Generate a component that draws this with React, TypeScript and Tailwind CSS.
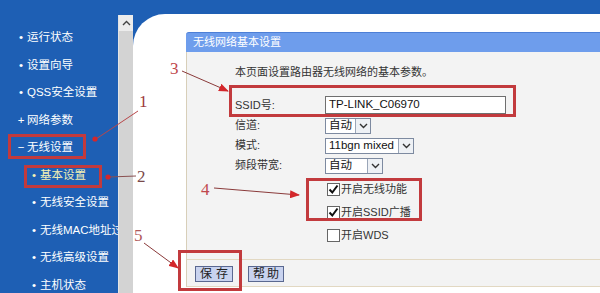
const menu = [
  { label: "运行状态", mark: "•" },
  { label: "设置向导", mark: "•" },
  { label: "QSS安全设置", mark: "•" },
  { label: "网络参数", mark: "+" },
  { label: "无线设置", mark: "−" },
  { label: "基本设置", mark: "•", sub: true, active: true },
  { label: "无线安全设置", mark: "•", sub: true },
  { label: "无线MAC地址过滤", mark: "•", sub: true },
  { label: "无线高级设置", mark: "•", sub: true },
  { label: "主机状态", mark: "•", sub: true },
]

const font = "font-['Liberation_Sans','Noto_Sans_CJK_SC',sans-serif]"

function Chevron() {
  return (
    <svg width="9" height="6" viewBox="0 0 9 6">
      <path d="M1 1 L4.5 4.5 L8 1" fill="none" stroke="#333" strokeWidth="1.4" />
    </svg>
  )
}

function Select({ value, width }: { value: string; width: string }) {
  return (
    <div className={`${width} h-[16px] flex border border-[#7d8aa0] bg-white`}>
      <div className="flex-1 pl-[3px] flex items-center text-[11.5px] text-[#111] leading-none">{value}</div>
      <div className="w-[15px] border-l border-[#9aa6b8] bg-[#eef1f5] flex items-center justify-center">
        <Chevron />
      </div>
    </div>
  )
}

function Check({ checked, label }: { checked: boolean; label: string }) {
  return (
    <div className="flex items-center ml-[2px]">
      <div className="w-[13px] h-[13px] border border-[#666] bg-white flex items-center justify-center">
        {checked && (
          <svg width="11" height="11" viewBox="0 0 11 11">
            <path d="M1.5 5.5 L4.3 8.5 L9.5 1.5" fill="none" stroke="#111" strokeWidth="2" />
          </svg>
        )}
      </div>
      <span className="ml-[1px] text-[11px] text-[#333]">{label}</span>
    </div>
  )
}

function Row({ label, children, className = "" }: { label: string; children: React.ReactNode; className?: string }) {
  return (
    <div className={`flex items-center ${className}`}>
      <div className="w-[90px] text-[11px] text-[#333]">{label}</div>
      {children}
    </div>
  )
}

export default function App() {
  return (
    <div className={`relative w-[600px] h-[293px] overflow-hidden bg-[#1e5fb4] flex flex-col ${font}`}>
      {/* top bar */}
      <div className="h-[14px] shrink-0" />

      <div className="flex flex-1 min-h-0">
        {/* sidebar */}
        <div className="w-[118px] shrink-0 pt-[10px] overflow-hidden">
          {menu.map((m) => (
            <div
              key={m.label}
              className={`h-[27.5px] flex items-center whitespace-nowrap text-[11.5px] ${m.sub ? "pl-[29px]" : "pl-[16px]"} ${m.active ? "text-[#f2f0b4]" : "text-white"}`}
            >
              <span className="w-[10px] shrink-0 text-center">{m.mark}</span>
              <span className="ml-[1px] shrink-0">{m.label}</span>
            </div>
          ))}
        </div>

        {/* scrollbar */}
        <div className="w-[15px] shrink-0 mt-[1px] bg-[#d3d3d3] border-l border-[#e4e4e4] flex flex-col">
          <div className="h-[16px] bg-[#ececec] flex items-center justify-center">
            <svg width="9" height="6" viewBox="0 0 9 6">
              <path d="M1 5 L4.5 1.5 L8 5" fill="none" stroke="#444" strokeWidth="1.4" />
            </svg>
          </div>
        </div>

        {/* main */}
        <div className="flex-1 bg-white rounded-tl-[32px] pl-[53px] pt-[18px] overflow-hidden">
          <div className="flex flex-col">
            <div className="h-[20px] bg-[#6e9dec] border-t border-[#4d7fd6] rounded-tl-[3px] pl-[7px] flex items-center text-[11px] text-white">
              无线网络基本设置
            </div>
            <div className="bg-[#f3f3f3] border-l border-[#d8cfb9] flex flex-col">
              <div className="pl-[48px] flex flex-col">
                <div className="mt-[12px] h-[16px] flex items-center text-[11px] text-[#333]">
                  本页面设置路由器无线网络的基本参数。
                </div>
                <Row label="SSID号:" className="mt-[15px] h-[20px]">
                  <div className="w-[181px] h-[18px] border border-[#6f6f6f] bg-white pl-[3px] flex items-center text-[11.5px] text-[#111]">
                    TP-LINK_C06970
                  </div>
                </Row>
                <Row label="信道:" className="mt-[1px] h-[19px]">
                  <Select value="自动" width="w-[46px]" />
                </Row>
                <Row label="模式:" className="mt-[1px] h-[19px]">
                  <Select value="11bgn mixed" width="w-[89px]" />
                </Row>
                <Row label="频段带宽:" className="mt-[1px] h-[19px]">
                  <Select value="自动" width="w-[58px]" />
                </Row>
                <Row label="" className="mt-[5px] h-[19px]">
                  <Check checked label="开启无线功能" />
                </Row>
                <Row label="" className="mt-[4px] h-[19px]">
                  <Check checked label="开启SSID广播" />
                </Row>
                <Row label="" className="mt-[4px] h-[19px]">
                  <Check checked={false} label="开启WDS" />
                </Row>
              </div>
              <div className="mt-[14px] border-t border-b border-[#e2d8c2] pl-[8px] pt-[6px] pb-[4px] flex gap-[15px]">
                <button className="w-[38px] h-[16px] bg-[#c9d3ef] border border-[#5a6890] text-[12px] tracking-[4px] pl-[4px] leading-none text-[#222]">
                  保存
                </button>
                <button className="w-[36px] h-[16px] bg-[#c9d3ef] border border-[#5a6890] text-[12px] tracking-[2px] pl-[2px] leading-none text-[#222]">
                  帮助
                </button>
              </div>
            </div>
          </div>
        </div>
      </div>

      {/* annotations */}
      <div className="absolute left-[8px] top-[134px] w-[78px] h-[25px] border-[3px] border-[#c23a3d]" />
      <div className="absolute left-[24px] top-[165px] w-[78px] h-[23px] border-[3px] border-[#c23a3d]" />
      <div className="absolute left-[229px] top-[85px] w-[287px] h-[32px] border-[3px] border-[#c23a3d]" />
      <div className="absolute left-[306px] top-[178px] w-[116px] h-[43px] border-[3px] border-[#c23a3d]" />
      <div className="absolute left-[178px] top-[250px] w-[64px] h-[41px] border-[3px] border-[#c23a3d]" />

      <svg className="absolute inset-0 pointer-events-none" width="600" height="293" viewBox="0 0 600 293">
        <defs>
          <marker id="ah" markerWidth="10" markerHeight="8" refX="9" refY="4" orient="auto" markerUnits="userSpaceOnUse">
            <path d="M0 0 L10 4 L0 8 Z" fill="#d3272b" />
          </marker>
        </defs>
        <line x1="138" y1="111" x2="96" y2="139" stroke="#b8474a" strokeWidth="1" />
        <circle cx="95" cy="139" r="2.6" fill="#d3272b" />
        <line x1="109" y1="177" x2="136" y2="176" stroke="#8a5050" strokeWidth="1" />
        <circle cx="108" cy="177" r="2.6" fill="#d3272b" />
        <line x1="182" y1="71" x2="228" y2="91" stroke="#8a3a3a" strokeWidth="1" markerEnd="url(#ah)" />
        <line x1="214" y1="188" x2="299" y2="195" stroke="#8a3a3a" strokeWidth="1" markerEnd="url(#ah)" />
        <line x1="144" y1="243" x2="178" y2="268" stroke="#8a3a3a" strokeWidth="1" markerEnd="url(#ah)" />
      </svg>

      <span className="absolute left-[139px] top-[93px] text-[17px] leading-none text-[#9e3a3c] font-['Liberation_Serif',serif]">1</span>
      <span className="absolute left-[137px] top-[168px] text-[17px] leading-none text-[#7a4a4a] font-['Liberation_Serif',serif]">2</span>
      <span className="absolute left-[170px] top-[60px] text-[17px] leading-none text-[#c0484c] font-['Liberation_Serif',serif]">3</span>
      <span className="absolute left-[201px] top-[181px] text-[17px] leading-none text-[#c0484c] font-['Liberation_Serif',serif]">4</span>
      <span className="absolute left-[134px] top-[227px] text-[17px] leading-none text-[#b0585a] font-['Liberation_Serif',serif]">5</span>
    </div>
  )
}
